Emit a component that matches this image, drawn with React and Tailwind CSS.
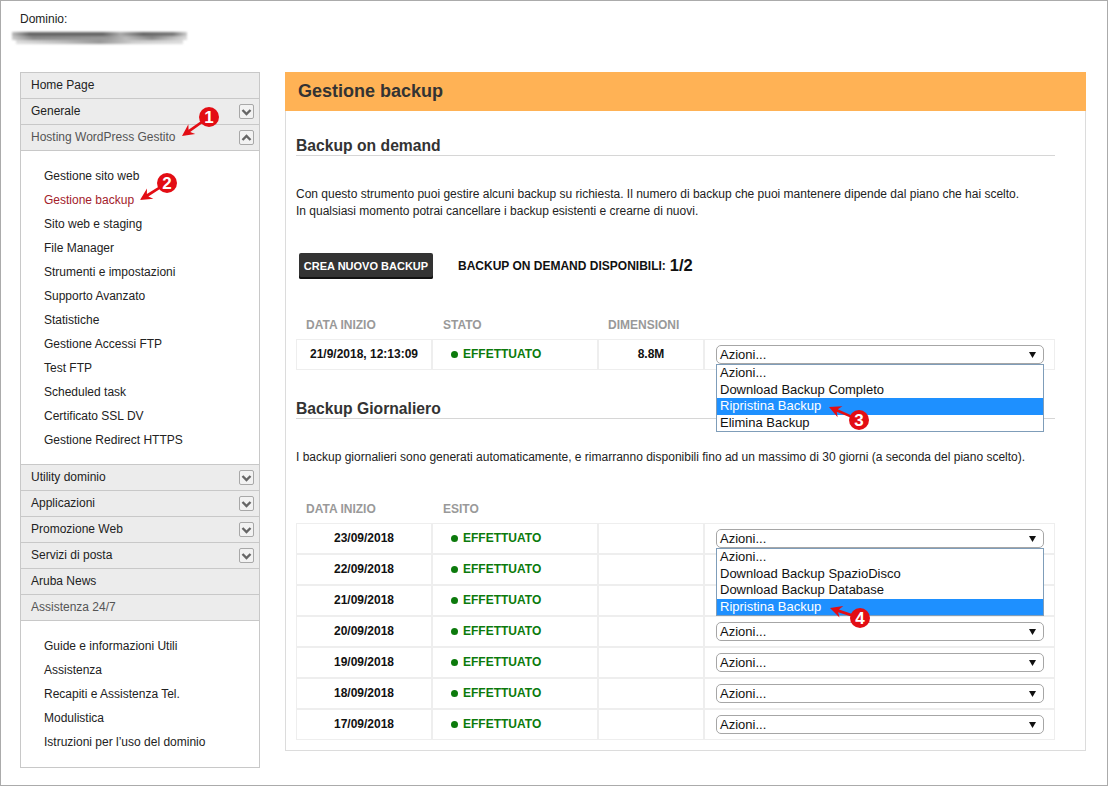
import React from 'react';

const hostingLinks = ['Gestione sito web', 'Gestione backup', 'Sito web e staging', 'File Manager', 'Strumenti e impostazioni', 'Supporto Avanzato', 'Statistiche', 'Gestione Accessi FTP', 'Test FTP', 'Scheduled task', 'Certificato SSL DV', 'Gestione Redirect HTTPS'];
const helpLinks = ['Guide e informazioni Utili', 'Assistenza', 'Recapiti e Assistenza Tel.', 'Modulistica', "Istruzioni per l’uso del dominio"];
const dailyRows = ['23/09/2018', '22/09/2018', '21/09/2018', '20/09/2018', '19/09/2018', '18/09/2018', '17/09/2018'];

const Toggle = ({ up }) => (
  <span className="flex h-[15px] w-[15px] items-center justify-center rounded-[2px] border border-[#a8a8a8] bg-[#f2f2f2]">
    <svg width="11" height="8" viewBox="0 0 11 8">
      <path d={up ? 'M1.5 6 L5.5 2 L9.5 6' : 'M1.5 2 L5.5 6 L9.5 2'} fill="none" stroke="#666" strokeWidth="2.4" />
    </svg>
  </span>
);

const MenuRow = ({ label, toggle, up, muted }) => (
  <div className={`flex h-[26px] items-center justify-between border-b border-[#c8c8c8] bg-[#ececec] pl-[10px] pr-[5px] ${muted ? 'text-[#555]' : 'text-[#222]'}`}>
    <span className="pb-[2px]">{label}</span>
    {toggle && <Toggle up={up} />}
  </div>
);

const Sidebar = () => (
  <aside className="w-[240px] shrink-0 self-start border border-[#c8c8c8] text-[12px]">
    <MenuRow label="Home Page" />
    <MenuRow label="Generale" toggle />
    <MenuRow label="Hosting WordPress Gestito" toggle up muted />
    <ul className="border-b border-[#c8c8c8] pb-[12px] pl-[23px] pt-[13px]">
      {hostingLinks.map((link) => (
        <li key={link} className={`flex h-[24px] items-center ${link === 'Gestione backup' ? 'text-[#a3202a]' : 'text-[#222]'}`}>{link}</li>
      ))}
    </ul>
    <MenuRow label="Utility dominio" toggle />
    <MenuRow label="Applicazioni" toggle />
    <MenuRow label="Promozione Web" toggle />
    <MenuRow label="Servizi di posta" toggle />
    <MenuRow label="Aruba News" />
    <MenuRow label="Assistenza 24/7" muted />
    <ul className="pb-[13px] pl-[23px] pt-[13px]">
      {helpLinks.map((link) => (
        <li key={link} className="flex h-[24px] items-center text-[#222]">{link}</li>
      ))}
    </ul>
  </aside>
);

const Cell = ({ className = '', children }) => (
  <div className={`flex items-center border border-[#eeeeee] ${className}`}>{children}</div>
);

const Status = () => (
  <span className="flex items-center gap-[5px] pb-[1px] pl-[18px] text-[12px] font-bold text-[#0c7a0c]">
    <span className="h-[7px] w-[7px] rounded-full bg-[#0c7a0c]" />
    EFFETTUATO
  </span>
);

const SelectBox = () => (
  <div className="flex h-[19px] w-[328px] items-center justify-between rounded-[5px] border border-[#a6a6a6] bg-white pl-[3px] pr-[7px] text-[13px] text-[#111]">
    <span>Azioni...</span>
    <svg width="7" height="6" viewBox="0 0 7 6"><path d="M0 0 H7 L3.5 6 Z" fill="#111" /></svg>
  </div>
);

const OptionList = ({ options, active }) => (
  <ul className="absolute left-[11px] top-[24px] z-10 w-[328px] border border-[#7f9db9] bg-white text-[13px] leading-[16.5px] text-[#111]">
    {options.map((option) => (
      <li key={option} className={`pl-[3px] ${option === active ? 'bg-[#1e90ff] text-white' : ''}`}>{option}</li>
    ))}
  </ul>
);

const Row = ({ first, second, third, children }) => (
  <div className="grid h-[31px] grid-cols-[136px_166px_106px_351px]">
    <Cell className="justify-center pb-[1px] text-[12px] font-bold text-[#111]">{first}</Cell>
    <Cell>{second}</Cell>
    <Cell className="justify-center pb-[1px] text-[12px] font-bold text-[#111]">{third}</Cell>
    <Cell className="relative pl-[11px]">{children}</Cell>
  </div>
);

const Heading = ({ children, className = '' }) => (
  <h2 className={`h-[20px] border-b border-[#d6d6d6] text-[15.7px] font-bold leading-[20px] text-[#333] ${className}`}>{children}</h2>
);

const TableHead = ({ labels }) => (
  <div className="mb-[4px] grid h-[20px] grid-cols-[137px_165px_106px] items-center pl-[10px] text-[12px] font-bold text-[#999]">
    {labels.map((label) => <span key={label}>{label}</span>)}
  </div>
);

const Callouts = () => {
  const marks = [
    { n: 1, cx: 208, cy: 116, tip: [181, 135] },
    { n: 2, cx: 166, cy: 182, tip: [139, 199] },
    { n: 3, cx: 858, cy: 419, tip: [828, 406] },
    { n: 4, cx: 859, cy: 617, tip: [829, 607] },
  ];
  return (
    <svg className="pointer-events-none absolute left-0 top-0 z-20" width="1108" height="786" viewBox="0 0 1108 786">
      {marks.map(({ n, cx, cy, tip }) => {
        const deg = (Math.atan2(cy - tip[1], cx - tip[0]) * 180) / Math.PI;
        const len = Math.hypot(cx - tip[0], cy - tip[1]);
        return (
          <g key={n}>
            <g transform={`translate(${tip[0]} ${tip[1]}) rotate(${deg})`}>
              <path d={`M0 0 L12 -6 L9 -1.4 L${len} -1.2 L${len} 1.2 L9 1.4 L12 6 Z`} fill="#e30d14" />
            </g>
            <circle cx={cx} cy={cy} r="10" fill="#e30d14" />
            <text x={cx} y={cy + 6} textAnchor="middle" fill="#fff" fontSize="17" fontWeight="700" fontFamily="'Liberation Sans', sans-serif">{n}</text>
          </g>
        );
      })}
    </svg>
  );
};

export default function App() {
  return (
    <div className="relative h-[786px] w-[1108px] border border-[#ababab] bg-white font-['Liberation_Sans',Arial,sans-serif] text-[12px] text-[#222]">
      <div className="h-[71px] pl-[19px] pt-[11px]">
        <p className="leading-[14px]">Dominio:</p>
        {/* blurred-out domain name */}
        <div className="-ml-[8px] mt-[6px] w-[175px] blur-[1px]">
          <div className="h-[4px] bg-[linear-gradient(90deg,#bbb_0%,#666_10%,#666_52%,#aaa_62%,#666_75%,#777_92%,#ccc_100%)]" />
          <div className="h-[4px] bg-[linear-gradient(90deg,#ccc_0%,#8a8a8a_12%,#999_55%,#bbb_65%,#8a8a8a_80%,#ddd_100%)]" />
          <div className="mx-[4px] h-[4px] bg-[linear-gradient(90deg,#ddd_0%,#bbb_30%,#999_50%,#ccc_70%,#ddd_100%)]" />
        </div>
      </div>

      <div className="flex items-start gap-[25px] pl-[19px]">
        <Sidebar />

        <main className="h-[679px] w-[801px] border border-t-0 border-[#dcdcdc]">
          <h1 className="-mx-[1px] flex h-[39px] items-center bg-[#ffb255] pl-[13px] text-[18px] font-bold text-[#333]">Gestione backup</h1>

          <div className="w-[769px] pl-[10px] pt-[25px]">
            <Heading>Backup on demand</Heading>

            <p className="mt-[30px] leading-[17px] text-[#222]">
              Con questo strumento puoi gestire alcuni backup su richiesta. Il numero di backup che puoi mantenere dipende dal piano che hai scelto.<br />
              In qualsiasi momento potrai cancellare i backup esistenti e crearne di nuovi.
            </p>

            <div className="mt-[33px] flex items-center pl-[3px]">
              <button className="h-[26px] w-[134px] rounded-[2px] bg-[#333] text-[11px] font-bold text-white shadow-[inset_0_-2px_0_#111]">CREA NUOVO BACKUP</button>
              <span className="ml-[25px] text-[12px] font-bold text-[#111]">BACKUP ON DEMAND DISPONIBILI:</span>
              <span className="-mt-[2px] ml-[4px] text-[16.5px] font-bold text-[#111]">1/2</span>
            </div>

            <div className="mt-[36px]">
              <TableHead labels={['DATA INIZIO', 'STATO', 'DIMENSIONI']} />
              <Row first="21/9/2018, 12:13:09" second={<Status />} third="8.8M">
                <SelectBox />
                <OptionList active="Ripristina Backup" options={['Azioni...', 'Download Backup Completo', 'Ripristina Backup', 'Elimina Backup']} />
              </Row>
            </div>

            <Heading className="mt-[29px]">Backup Giornaliero</Heading>

            <p className="mt-[30px] leading-[17px] text-[#222]">I backup giornalieri sono generati automaticamente, e rimarranno disponibili fino ad un massimo di 30 giorni (a seconda del piano scelto).</p>

            <div className="mt-[33px]">
              <TableHead labels={['DATA INIZIO', 'ESITO']} />
              {dailyRows.map((date, i) => (
                <Row key={date} first={date} second={<Status />}>
                  {i > 0 && i < 3 ? null : <SelectBox />}
                  {i === 0 && (
                    <OptionList active="Ripristina Backup" options={['Azioni...', 'Download Backup SpazioDisco', 'Download Backup Database', 'Ripristina Backup']} />
                  )}
                </Row>
              ))}
            </div>
          </div>
        </main>
      </div>

      <Callouts />
    </div>
  );
}
